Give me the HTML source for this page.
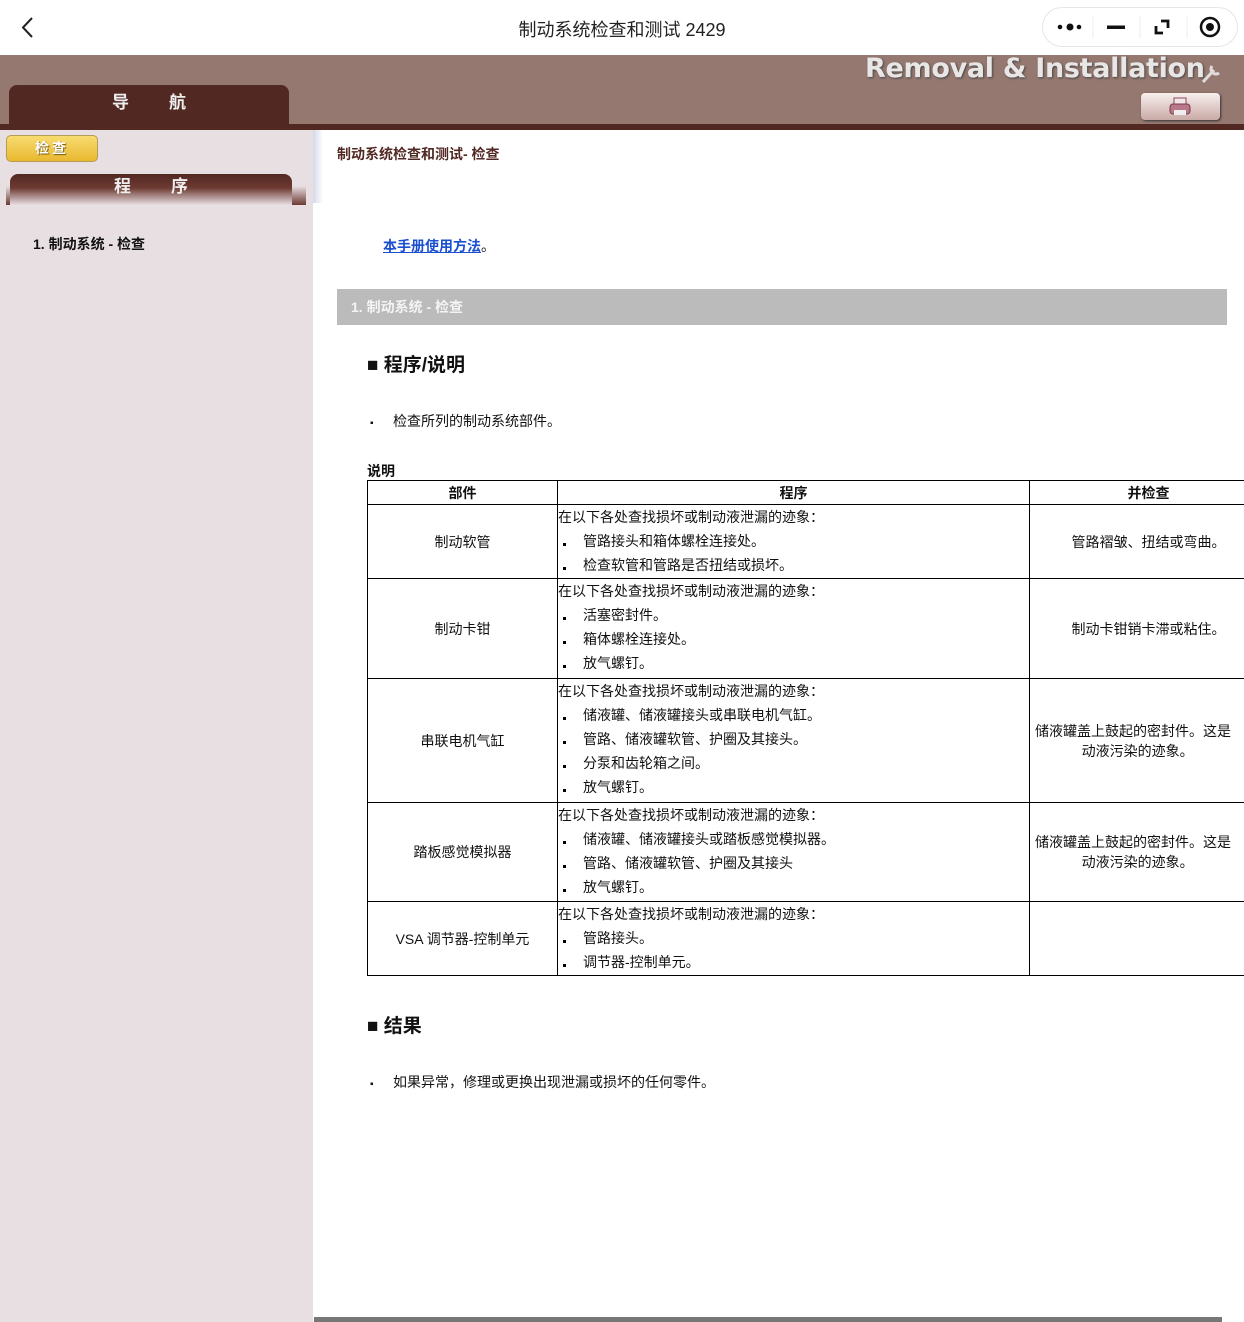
<!DOCTYPE html>
<html><head><meta charset="utf-8"><style>
*{margin:0;padding:0;box-sizing:border-box}
body{width:1244px;height:1322px;position:relative;overflow:hidden;background:#fff;font-family:"Liberation Sans","Noto Sans CJK SC",sans-serif;color:#111}
.a{position:absolute}
.top{left:0;top:0;width:1244px;height:55px;background:#fff}
.title{left:0;width:1244px;top:16px;text-align:center;font-size:18px;color:#222}
.caps{left:1042px;top:7px;width:196px;height:40px;border:1px solid #e6e6e6;border-radius:20px}
.hdr{left:0;top:55px;width:1244px;height:69px;background:#957870}
.band{left:0;top:124px;width:1244px;height:6px;background:#522822}
.nav{left:9px;top:85px;width:280px;height:42px;background:#522822;border-radius:8px 8px 0 0;color:#eee;font-weight:bold;font-size:17px;text-align:center;line-height:36px;letter-spacing:40px;padding-left:40px}
.side{left:0;top:130px;width:313px;height:1192px;background:#e8dfe3}
.btn{left:6px;top:135px;width:92px;height:27px;background:linear-gradient(#f8dc70,#e9b830);border:1px solid #b79c58;border-radius:5px;color:#fff;font-weight:bold;font-size:14px;text-align:center;line-height:25px;text-shadow:1px 1px 1px #7a5a10;letter-spacing:3px}
.prog{left:10px;top:174px;width:282px;height:31px;background:linear-gradient(#522822 0%,#6d3a32 45%,#e8dfe3 100%);border-radius:8px 8px 0 0;color:#eee;font-weight:bold;font-size:17px;text-align:center;line-height:26px;letter-spacing:40px;padding-left:40px}
.progside{left:6px;top:186px;width:5px;height:19px;background:linear-gradient(#e8dfe3,#6d3a32)}
.progside2{left:292px;top:186px;width:14px;height:19px;background:linear-gradient(#e8dfe3,#6d3a32)}
.shadow{left:313px;top:130px;width:10px;height:73px;background:linear-gradient(90deg,#d4d8e8,#fff)}
table{border-collapse:collapse;font-size:14px;table-layout:fixed}
td,th{border:1px solid #000;overflow:hidden}
th{font-size:14px;height:24px;font-weight:bold}
td.c{text-align:center;vertical-align:middle}
td.p{vertical-align:top;padding:0}
.l{height:24px;line-height:24px;white-space:nowrap}
.b{padding-left:25px;position:relative}
.b:before{content:"";position:absolute;left:5px;top:14px;width:3px;height:3px;background:#000}
</style></head><body>
<div class="a top"></div>
<div class="a title">制动系统检查和测试 2429</div>
<svg class="a" style="left:18px;top:16px" width="20" height="24"><path d="M14 2 L5 11.5 L14 21" stroke="#222" stroke-width="2" fill="none"/></svg>
<div class="a caps"></div>
<svg class="a" style="left:1042px;top:7px" width="196" height="40">
<circle cx="18" cy="20" r="2.3" fill="#111"/><circle cx="28" cy="20" r="3.5" fill="#111"/><circle cx="37" cy="20" r="2.3" fill="#111"/>
<line x1="51" y1="9" x2="51" y2="31" stroke="#eee"/>
<rect x="65" y="18.5" width="18" height="3.5" fill="#111"/>
<line x1="98" y1="9" x2="98" y2="31" stroke="#eee"/>
<path d="M114 19 v7 h7 M119 14 h7 v7" stroke="#111" stroke-width="2.8" fill="none"/>
<line x1="145" y1="9" x2="145" y2="31" stroke="#eee"/>
<circle cx="168" cy="20" r="9" stroke="#111" stroke-width="2.5" fill="none"/><circle cx="168" cy="20" r="4" fill="#111"/>
</svg>
<div class="a hdr"></div>
<div class="a band"></div>
<div class="a" style="left:865px;top:53px;font-size:27px;font-weight:bold;color:#e9e6e6;font-family:'DejaVu Sans',sans-serif;text-shadow:1px 1px 2px #444;white-space:nowrap;letter-spacing:-0.3px">Removal &amp; Installation</div>
<svg class="a" style="left:1200px;top:60px" width="24" height="26"><path d="M3 22 L14 10 M12 6 a5 5 0 0 0 7 7" stroke="#e0dcdc" stroke-width="3" fill="none"/></svg>
<div class="a" style="left:1141px;top:93px;width:79px;height:27px;border-radius:4px;background:linear-gradient(#f8f0ee,#c9aaa6);box-shadow:1px 1px 2px #333"></div>
<svg class="a" style="left:1168px;top:96px" width="24" height="22"><rect x="6" y="2" width="12" height="8" fill="#f3e6ea" stroke="#8a4a5a"/><rect x="2" y="8" width="20" height="10" rx="3" fill="#b8788a" stroke="#7a3a4a"/><rect x="6" y="14" width="12" height="5" fill="#eee"/></svg>
<div class="a nav">导航</div>
<div class="a side"></div>
<div class="a shadow"></div>
<div class="a btn">检查</div>
<div class="a progside"></div><div class="a progside2"></div>
<div class="a prog">程序</div>
<div class="a" style="left:33px;top:234px;font-size:14px;font-weight:bold">1. 制动系统 - 检查</div>
<div class="a" style="left:337px;top:144px;font-size:14px;font-weight:bold;color:#522822">制动系统检查和测试- 检查</div>
<div class="a" style="left:383px;top:236px;font-size:14px"><span style="color:#1a4fd0;text-decoration:underline;font-weight:bold">本手册使用方法</span>。</div>
<div class="a" style="left:337px;top:289px;width:890px;height:36px;background:#bbbbbb;color:#f4f4f4;font-weight:bold;font-size:14px;line-height:36px;padding-left:14px">1. 制动系统 - 检查</div>
<div class="a" style="left:367px;top:350px;font-size:19px;font-weight:bold">■ 程序/说明</div>
<div class="a" style="left:370px;top:411px;font-size:14px"><span style="font-size:10px">▪</span>&nbsp;&nbsp;&nbsp;&nbsp;&nbsp;检查所列的制动系统部件。</div>
<div class="a" style="left:367px;top:461px;font-size:14px;font-weight:bold">说明</div>
<table class="a" style="left:367px;top:480px;width:900px">
<colgroup><col style="width:190px"><col style="width:472px"><col style="width:238px"></colgroup>
<tr><th>部件</th><th>程序</th><th>并检查</th></tr>
<tr style="height:74px"><td class="c">制动软管</td><td class="p"><div class="l">在以下各处查找损坏或制动液泄漏的迹象：</div><div class="l b">管路接头和箱体螺栓连接处。</div><div class="l b">检查软管和管路是否扭结或损坏。</div></td><td class="c">管路褶皱、扭结或弯曲。</td></tr>
<tr style="height:100px"><td class="c">制动卡钳</td><td class="p"><div class="l">在以下各处查找损坏或制动液泄漏的迹象：</div><div class="l b">活塞密封件。</div><div class="l b">箱体螺栓连接处。</div><div class="l b">放气螺钉。</div></td><td class="c">制动卡钳销卡滞或粘住。</td></tr>
<tr style="height:124px"><td class="c">串联电机气缸</td><td class="p"><div class="l">在以下各处查找损坏或制动液泄漏的迹象：</div><div class="l b">储液罐、储液罐接头或串联电机气缸。</div><div class="l b">管路、储液罐软管、护圈及其接头。</div><div class="l b">分泵和齿轮箱之间。</div><div class="l b">放气螺钉。</div></td><td class="c" style="text-align:left;padding-left:5px;line-height:20px">储液罐盖上鼓起的密封件。这是<br>&nbsp;&nbsp;&nbsp;&nbsp;&nbsp;&nbsp;&nbsp;&nbsp;&nbsp;&nbsp;&nbsp;&nbsp;动液污染的迹象。</td></tr>
<tr style="height:99px"><td class="c">踏板感觉模拟器</td><td class="p"><div class="l">在以下各处查找损坏或制动液泄漏的迹象：</div><div class="l b">储液罐、储液罐接头或踏板感觉模拟器。</div><div class="l b">管路、储液罐软管、护圈及其接头</div><div class="l b">放气螺钉。</div></td><td class="c" style="text-align:left;padding-left:5px;line-height:20px">储液罐盖上鼓起的密封件。这是<br>&nbsp;&nbsp;&nbsp;&nbsp;&nbsp;&nbsp;&nbsp;&nbsp;&nbsp;&nbsp;&nbsp;&nbsp;动液污染的迹象。</td></tr>
<tr style="height:74px"><td class="c">VSA 调节器-控制单元</td><td class="p"><div class="l">在以下各处查找损坏或制动液泄漏的迹象：</div><div class="l b">管路接头。</div><div class="l b">调节器-控制单元。</div></td><td class="c"></td></tr>
</table>
<div class="a" style="left:367px;top:1011px;font-size:19px;font-weight:bold">■ 结果</div>
<div class="a" style="left:370px;top:1072px;font-size:14px"><span style="font-size:10px">▪</span>&nbsp;&nbsp;&nbsp;&nbsp;&nbsp;如果异常，修理或更换出现泄漏或损坏的任何零件。</div>
<div class="a" style="left:314px;top:1317px;width:908px;height:5px;background:#777"></div>
</body></html>
